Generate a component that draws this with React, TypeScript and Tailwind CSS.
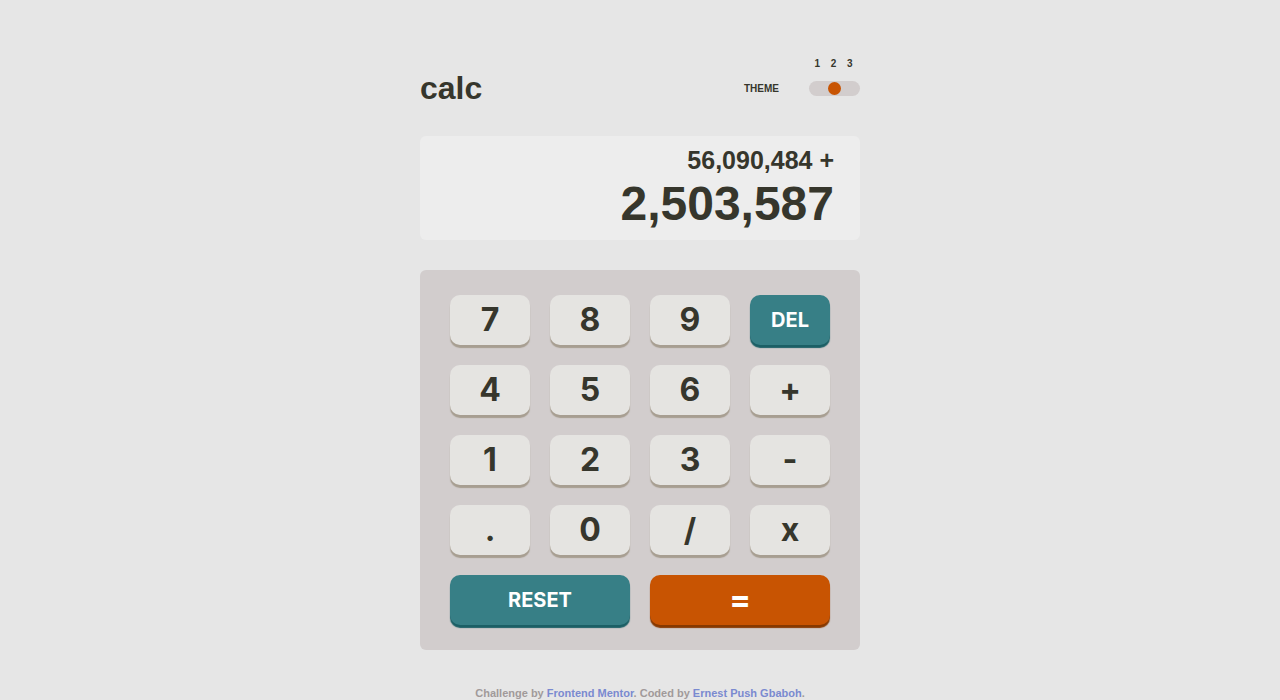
import React from "react";

const keyBase =
  "h-[50px] rounded-[10px] flex items-center justify-center font-bold";
const numKey =
  keyBase +
  " bg-[#e5e4e1] text-[#36362c] shadow-[0_3px_1px_#a79e91] text-[32px]";
const tealKey =
  keyBase +
  " bg-[#377f86] text-white shadow-[0_3px_1px_#1b5f65] text-[20px]";
const orangeKey =
  keyBase +
  " bg-[#c85402] text-white shadow-[0_3px_1px_#873901] text-[32px]";

export default function App() {
  const rows = [
    ["7", "8", "9", "DEL"],
    ["4", "5", "6", "+"],
    ["1", "2", "3", "-"],
    [".", "0", "/", "x"],
  ];
  return (
    <div className="min-h-[700px] w-full bg-[#e6e6e6] flex flex-col items-center pt-[59px] font-['Liberation_Sans',Arial,sans-serif]">
      <div className="w-[440px] flex flex-col">
        <div className="flex justify-end">
          <div className="w-[51px] grid grid-cols-3 text-[10px] font-bold text-[#36362c] leading-none pr-[2px] text-center">
            <span>1</span>
            <span>2</span>
            <span>3</span>
          </div>
        </div>
        <div className="flex items-center justify-between h-[36px] mt-[1px]">
          <div className="text-[32px] font-bold text-[#36362c] leading-none">
            calc
          </div>
          <div className="flex items-center">
            <div className="text-[10px] font-bold text-[#36362c] mr-[30px] leading-none mt-[2px]">
              THEME
            </div>
            <div className="w-[51px] h-[15px] rounded-full bg-[#d2cdcd] flex items-center justify-center">
              <div className="w-[13px] h-[13px] rounded-full bg-[#c85402]" />
            </div>
          </div>
        </div>

        <div className="mt-[30px] h-[104px] bg-[#ededed] rounded-[6px] flex flex-col items-end pr-[26px] pt-[10px] text-[#36362c] font-bold">
          <div className="text-[25px] leading-[28px]">56,090,484 +</div>
          <div className="text-[48px] leading-[56px] mt-[2px]">2,503,587</div>
        </div>

        <div className="mt-[30px] h-[380px] bg-[#d2cdcd] rounded-[6px] px-[30px] pt-[25px] flex flex-col gap-[20px] font-['Inter',sans-serif]">
          {rows.map((r, i) => (
            <div key={i} className="grid grid-cols-4 gap-[20px]">
              {r.map((k) => (
                <button key={k} className={k === "DEL" ? tealKey : numKey}>
                  {k}
                </button>
              ))}
            </div>
          ))}
          <div className="grid grid-cols-2 gap-[20px]">
            <button className={tealKey}>RESET</button>
            <button className={orangeKey}>=</button>
          </div>
        </div>

        <div className="mt-[35px] text-center text-[11px] font-bold text-[#a19a9a]">
          Challenge by <span className="text-[#7a8ad0]">Frontend Mentor</span>.
          Coded by <span className="text-[#7a8ad0]">Ernest Push Gbaboh</span>.
        </div>
      </div>
    </div>
  );
}
